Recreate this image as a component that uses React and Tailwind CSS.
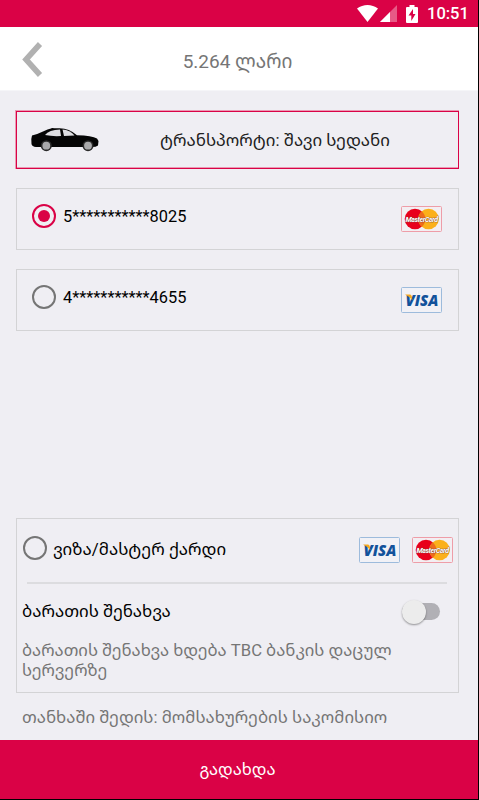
import React, { useState } from 'react'
import clsx from 'clsx'

const savedCards = [
  { id: 'mc', number: '5***********8025', brand: 'mastercard' },
  { id: 'visa', number: '4***********4655', brand: 'visa' },
]

const StatusBar = () => (
  <div className="h-[27px] shrink-0 bg-[#da0246] flex items-center justify-end pr-[10px] text-white">
    <svg width="21" height="17" viewBox="0 0 21 17" fill="currentColor">
      <path d="M0 3.6C6.2-1.1 14.8-1.1 21 3.6L10.5 17z" />
    </svg>
    <svg className="ml-[2px]" width="17" height="17" viewBox="0 0 17 17" fill="currentColor">
      <path d="M0 17L17 0v17z" opacity="0.35" />
      <path d="M0 17L10 7v10z" />
    </svg>
    <svg className="ml-[9px]" width="12" height="18" viewBox="0 0 12 18" fill="currentColor">
      <path d="M3.5 0h5v2H11q1 0 1 1v14q0 1-1 1H1q-1 0-1-1V3q0-1 1-1h2.500z" />
      <path d="M7 4L2.500 10.500H5.300v5.500L9.500 9H7z" fill="#da0246" />
    </svg>
    <span className="ml-[9px] w-[41px] pt-[2px] text-[16.5px] leading-none font-medium whitespace-nowrap">10:51</span>
  </div>
)

const Header = () => (
  <header className="h-[64px] shrink-0 bg-white border-b border-[#f5f5f8] flex items-center">
    <button className="w-[60px] pl-[22px] pt-[2px]">
      <svg width="21" height="35" viewBox="0 0 21 35" fill="none" stroke="#b1b1b1" strokeWidth="5.600">
        <path d="M18 2L4 17.500L18 33" />
      </svg>
    </button>
    <h1 className="flex-1 pr-[63px] pt-[7px] text-center text-[19px] text-[#757575]">5.264 ლარი</h1>
  </header>
)

const CarIcon = () => (
  <svg width="68" height="24" viewBox="0 0 68 24">
    <path
      d="M1 7.500Q7 6 12 3.500Q17 0.800 20 0.500L21 0Q24 0.300 28 0.200Q38 0 46 7.300Q61 7.500 66 10.500L67.500 13L67 17.500Q65 19 61 19H5Q1 18.500 0.500 16L0.300 11z"
      fill="#050505"
    />
    <path d="M14 7Q18 2 29 1.600L30 8Q21 8.500 14 7z" fill="#dedee2" />
    <path d="M31.500 1.600Q39 2 43.500 7.500L33 8z" fill="#dedee2" />
    <circle cx="15.300" cy="17.700" r="5.500" fill="#2a2a2a" />
    <circle cx="15.300" cy="17.700" r="3.900" fill="#a9a9ab" />
    <circle cx="57" cy="17.700" r="5.500" fill="#2a2a2a" />
    <circle cx="57" cy="17.700" r="3.900" fill="#a9a9ab" />
  </svg>
)

const MasterCard = () => (
  <svg className="overflow-visible" width="41" height="26" viewBox="0 0 41 26">
    <rect x="0.500" y="0.500" width="40" height="25" rx="1" fill="#f3eef2" stroke="#ee9da8" />
    <circle cx="14" cy="13" r="10.300" fill="#e8001c" />
    <circle cx="27.500" cy="13" r="10.300" fill="#fbb01b" />
    <path d="M20.750 5.200a10.300 10.300 0 0 1 0 15.600a10.300 10.300 0 0 1 0-15.600z" fill="#ee6c1c" />
    <text
      x="4.500"
      y="15.700"
      fontSize="7.500"
      textLength="32"
      lengthAdjust="spacing"
      letterSpacing="-0.600"
      fontWeight="700"
      fontStyle="italic"
      fill="#fff"
      stroke="#8a4a3c"
      strokeWidth="0.700"
      paintOrder="stroke"
    >
      MasterCard
    </text>
  </svg>
)

const Visa = () => (
  <svg width="41" height="26" viewBox="0 0 41 26">
    <rect x="0.500" y="0.500" width="40" height="25" rx="1" fill="#f1f1f6" stroke="#9dbbdc" />
    <text
      x="4.500"
      y="18.500"
      textLength="33"
      lengthAdjust="spacingAndGlyphs"
      fontFamily="Open Sans, sans-serif"
      fontSize="15"
      fontWeight="800"
      fontStyle="italic"
      fill="#12529b"
    >
      VISA
    </text>
    <path d="M4 7.500h5q1.400 0 1.700 1.700l.7 4Q8.500 9.500 4 7.500z" fill="#f5a81c" />
  </svg>
)

const BrandLogo = ({ brand }) => (brand === 'visa' ? <Visa /> : <MasterCard />)

const Radio = ({ checked }) => (
  <span
    className={clsx(
      'size-6 shrink-0 rounded-full border-[2.5px] flex items-center justify-center',
      checked ? 'border-[#da0246]' : 'border-[#757575]'
    )}
  >
    {checked && <span className="size-3 rounded-full bg-[#da0246]" />}
  </span>
)

const App = () => {
  const [selected, setSelected] = useState('mc')
  const [saveCard, setSaveCard] = useState(false)

  return (
    <div className="w-[479px] h-[800px] bg-black pr-px pb-px">
      <div className="h-full flex flex-col bg-[#efeef3] text-black font-[Roboto,'Noto_Sans_Georgian','Noto_Sans','DejaVu_Sans',sans-serif]">
        <StatusBar />
        <Header />

        <main className="flex-1 flex flex-col pl-4 pr-[19px] pt-[19px]">
          {/* Transport */}
          <div className="h-[59px] -ml-px border-t border-l border-[#e99ab3]">
            <div className="h-full border border-[#da0246] shadow-[inset_0_-1px_#e99ab3] flex items-center pl-[14px]">
              <CarIcon />
              <span className="flex-1 pr-[7px] pt-px text-center text-[16.850px] whitespace-nowrap text-[#212121]">ტრანსპორტი: შავი სედანი</span>
            </div>
          </div>

          {/* Saved cards */}
          {savedCards.map((card) => (
            <button
              key={card.id}
              onClick={() => setSelected(card.id)}
              className="mt-[19px] h-[62px] border border-[#d3d3d5] flex items-center justify-between pl-[15px] pr-4"
            >
              <span className="flex items-center gap-[7px] pb-[6px] text-[16.350px]">
                <Radio checked={selected === card.id} />
                <span className="pt-[2px]">{card.number}</span>
              </span>
              <BrandLogo brand={card.brand} />
            </button>
          ))}

          {/* New card */}
          <div className="mt-[187px] h-[175px] shrink-0 border border-[#d3d3d5] pl-[5px] pr-[5px]">
            <button
              onClick={() => setSelected('new')}
              className="w-full h-[63px] pb-[2px] flex items-center"
            >
              <span className="pl-px pb-[3px]">
                <Radio checked={selected === 'new'} />
              </span>
              <span className="ml-[6px] mr-auto text-[16.850px]">ვიზა/მასტერ ქარდი</span>
              <Visa />
              <span className="ml-3">
                <MasterCard />
              </span>
            </button>
            <div className="ml-[5px] mr-[6px] h-[2px] bg-[#dcdcdf]" />
            <div className="h-[55px] flex items-center justify-between pr-[13px]">
              <span className="text-[16.850px]">ბარათის შენახვა</span>
              <button
                onClick={() => setSaveCard(!saveCard)}
                className={clsx('w-[38px] h-[17px] rounded-full bg-[#b1b0b5] flex items-center', saveCard && 'justify-end')}
              >
                <span className="size-6 shrink-0 rounded-full bg-[#ececec] shadow-[0_1px_2px_rgba(0,0,0,0.4)]" />
              </button>
            </div>
            <p className="pt-[2px] text-[16.650px] leading-[20px] text-[#757575]">
              ბარათის შენახვა ხდება TBC ბანკის დაცულ
              <br />
              სერვერზე
            </p>
          </div>

          <p className="mt-[14px] pl-[6px] text-[16.750px] leading-[20px] text-[#757575]">თანხაში შედის: მომსახურების საკომისიო</p>
        </main>

        <button className="h-[59px] shrink-0 bg-[#da0246] pr-[3px] pt-[2px] text-white text-[16.600px]">გადახდა</button>
      </div>
    </div>
  )
}

export default App
